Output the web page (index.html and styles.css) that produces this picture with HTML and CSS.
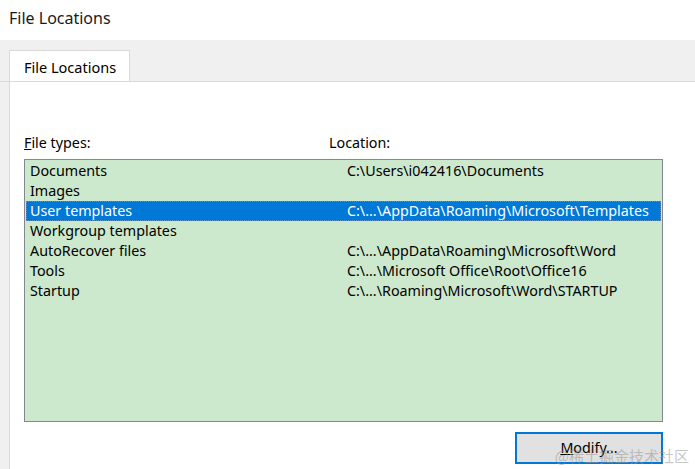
FILE: index.html
```html
<!DOCTYPE html>
<html>
<head>
<meta charset="utf-8">
<link rel="stylesheet" href="styles.css">
</head>
<body>
<div class="header">File Locations</div>
<div class="tabstrip">
  <div class="tab">File Locations</div>
</div>
<div class="panel">
  <div class="labels">
    <span class="lbl-types"><u>F</u>ile types:</span>
    <span>Location:</span>
  </div>
  <div class="list">
    <div class="row"><span>Documents</span><span>C:\Users\i042416\Documents</span></div>
    <div class="row"><span>Images</span><span></span></div>
    <div class="row selected"><span>User templates</span><span>C:\...\AppData\Roaming\Microsoft\Templates</span></div>
    <div class="row"><span>Workgroup templates</span><span></span></div>
    <div class="row"><span>AutoRecover files</span><span>C:\...\AppData\Roaming\Microsoft\Word</span></div>
    <div class="row"><span>Tools</span><span>C:\...\Microsoft Office\Root\Office16</span></div>
    <div class="row"><span>Startup</span><span>C:\...\Roaming\Microsoft\Word\STARTUP</span></div>
  </div>
  <div class="actions">
    <button class="btn"><u>M</u>odify...</button>
  </div>
</div>
<div class="watermark">@稀土掘金技术社区</div>
</body>
</html>
```

FILE: styles.css
```css
html, body {
  margin: 0;
  padding: 0;
  background: #ffffff;
  width: 695px;
  height: 469px;
  overflow: hidden;
  font-family: "Noto Sans", "Open Sans", "Liberation Sans", sans-serif;
  color: #000;
}
body { position: relative; }
.header {
  height: 40px;
  box-sizing: border-box;
  padding: 7px 0 0 9px;
  font-size: 16px;
  line-height: 22px;
  color: #1a1a1a;
}
.tabstrip {
  background: #f0f0f0;
  padding: 10px 0 0 9px;
  height: 31px;
  box-sizing: content-box;
  border-bottom: 1px solid #d9d9d9;
  display: flex;
  align-items: flex-start;
}
.tab {
  width: 121px;
  height: 31px;
  box-sizing: border-box;
  margin-bottom: -1px;
  background: #ffffff;
  border: 1px solid #d9d9d9;
  border-bottom: none;
  padding: 6px 0 0 14px;
  font-size: 14.5px;
  line-height: 20px;
  position: relative;
  z-index: 1;
}
.panel {
  margin-left: 9px;
  border-left: 1px solid #d9d9d9;
  background: #ffffff;
  height: 387px;
  padding: 51px 0 0 14px;
  box-sizing: border-box;
  background-clip: padding-box;
  box-shadow: -9px 0 0 #f0f0f0;
}
.labels {
  display: grid;
  grid-template-columns: 305px auto;
  font-size: 14.3px;
  line-height: 20px;
  height: 20px;
}
.list {
  margin-top: 6px;
  width: 639px;
  height: 263px;
  box-sizing: border-box;
  border: 1px solid #828790;
  background: #cce8cd;
  padding: 1px;
}
.row {
  display: grid;
  grid-template-columns: 317px auto;
  height: 20px;
  line-height: 20px;
  font-size: 14.3px;
  padding-left: 4px;
  white-space: nowrap;
  box-sizing: border-box;
}
.row.selected {
  background: #0078d7;
  color: #ffffff;
  outline: 1px dotted #5a8fbf;
  outline-offset: -1px;
}
.actions {
  width: 639px;
  display: flex;
  justify-content: flex-end;
  margin-top: 10px;
}
.btn {
  width: 148px;
  height: 32px;
  box-sizing: border-box;
  border: 2px solid #0078d7;
  background: #e1e1e1;
  font-family: inherit;
  font-size: 14.3px;
  color: #000;
  padding: 0;
  line-height: 20px;
}
.watermark {
  position: absolute;
  right: 6px;
  bottom: 3px;
  font-family: "Noto Sans CJK SC", sans-serif;
  font-size: 15px;
  color: rgba(150, 150, 150, 0.55);
  line-height: 20px;
}
```
